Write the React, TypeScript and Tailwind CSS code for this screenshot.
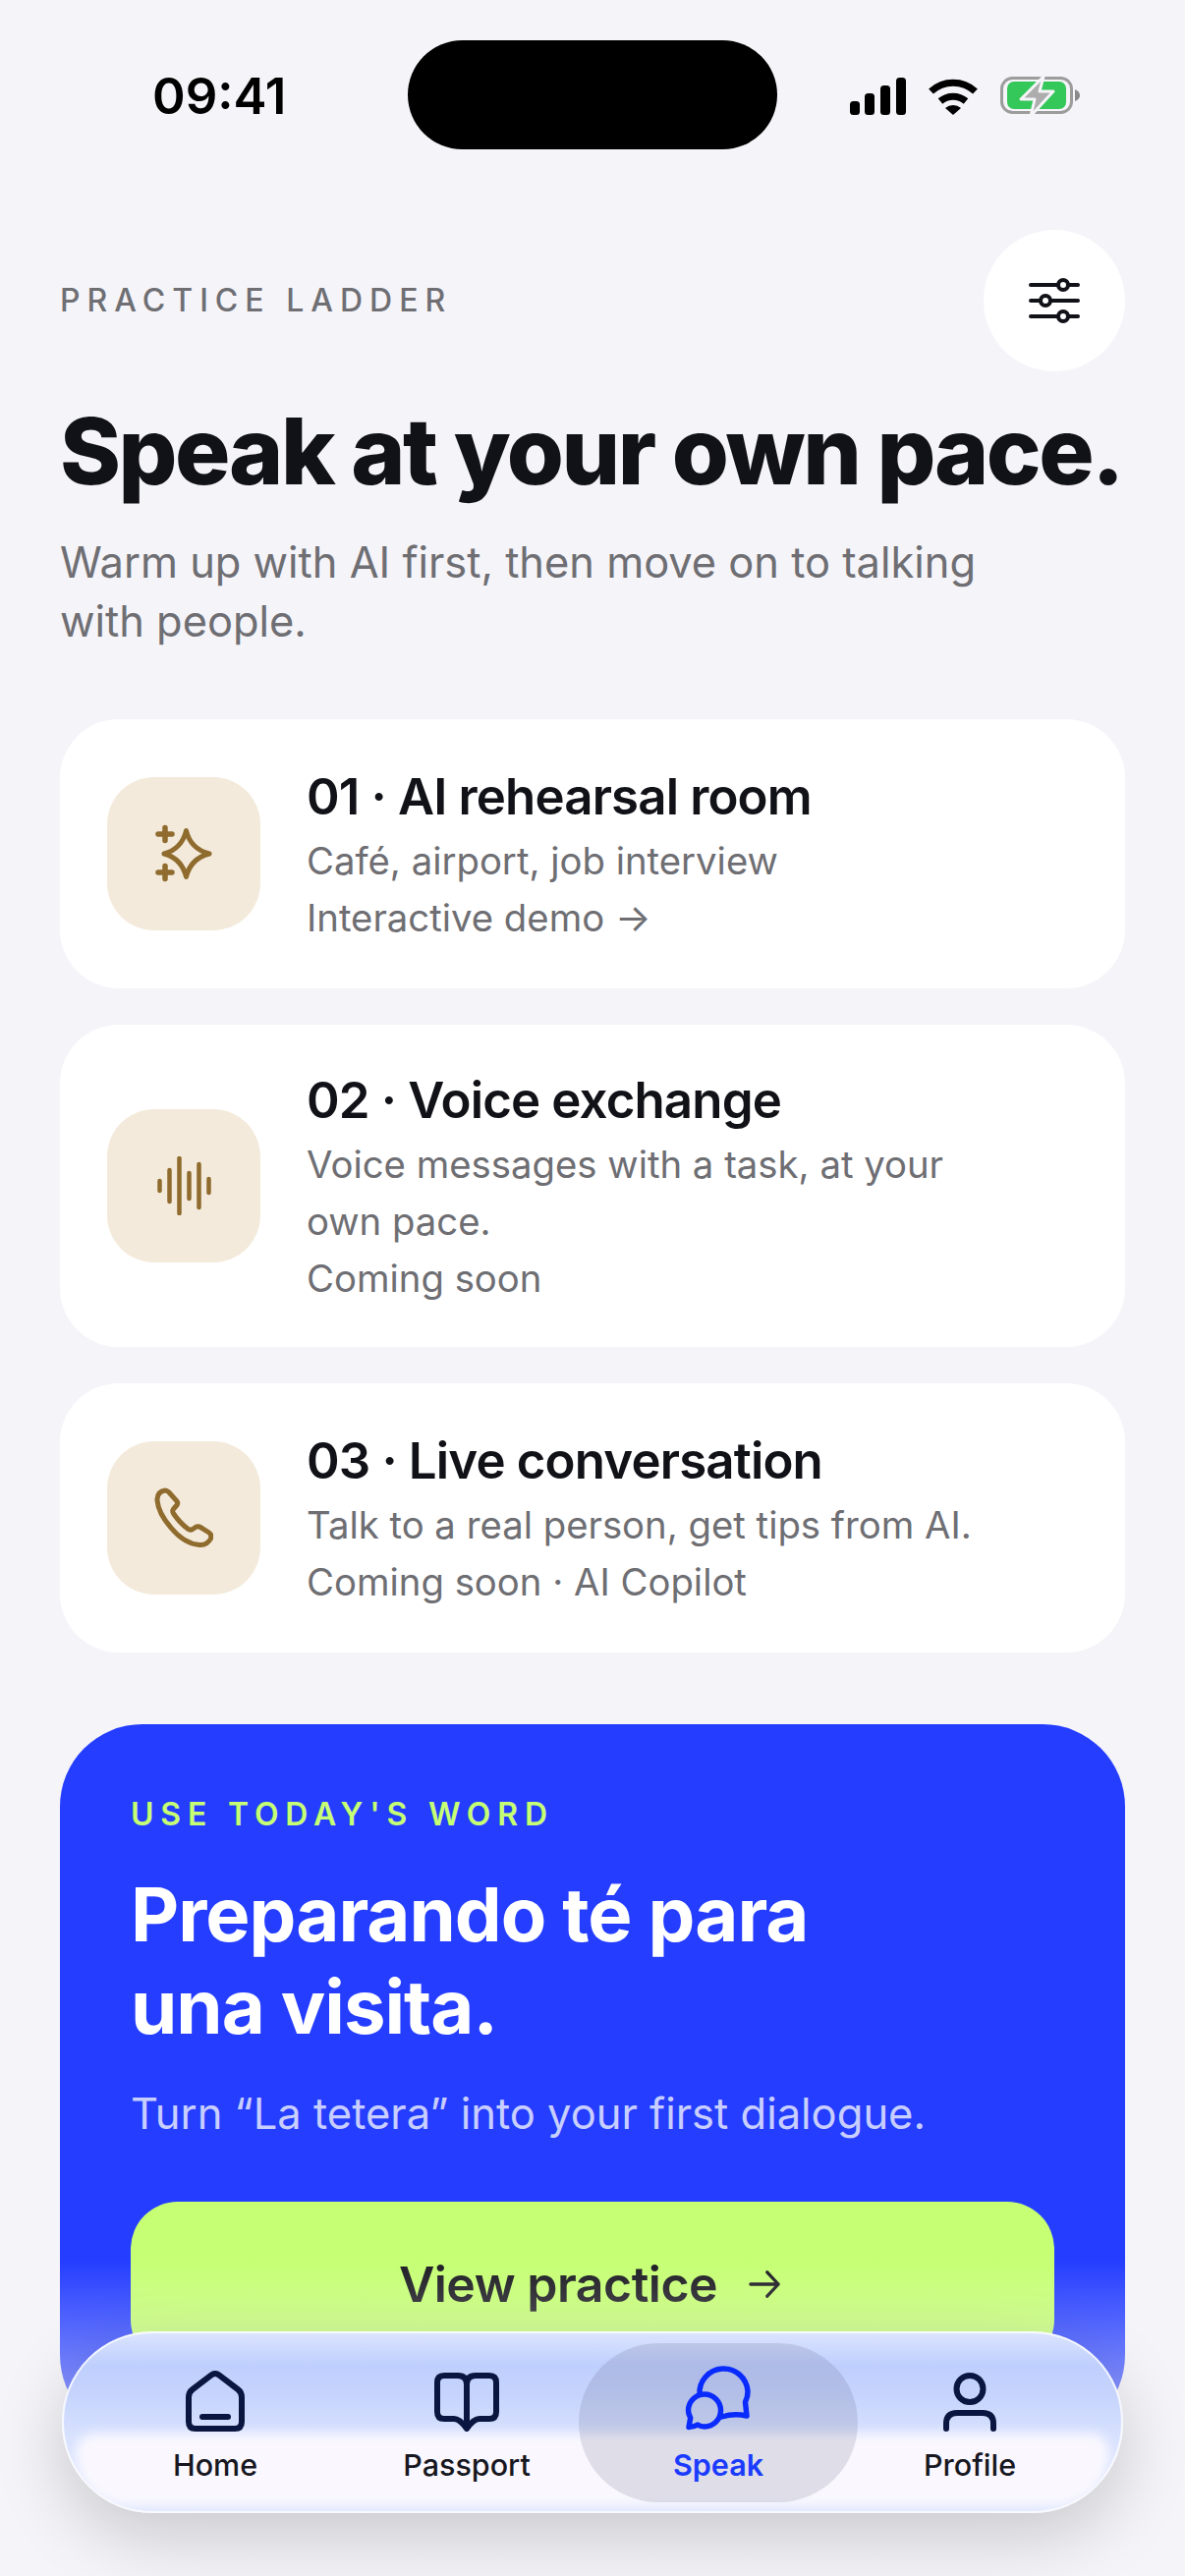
import type { ReactNode } from "react";

const cards = [
  {
    title: "01 · AI rehearsal room",
    lines: ["Café, airport, job interview", "Interactive demo →"],
    icon: "sparkle",
    size: "h-[274px]",
  },
  {
    title: "02 · Voice exchange",
    lines: ["Voice messages with a task, at your", "own pace.", "Coming soon"],
    icon: "wave",
    size: "h-[328px]",
  },
  {
    title: "03 · Live conversation",
    lines: ["Talk to a real person, get tips from AI.", "Coming soon · AI Copilot"],
    icon: "phone",
    size: "h-[274px]",
  },
];

function TileIcon({ name }: { name: string }) {
  if (name === "sparkle") {
    return (
      <svg width="60" height="60" viewBox="0 0 60 60" fill="none" stroke="#8f6b2e" strokeWidth="5" strokeLinecap="round" strokeLinejoin="round">
        <path d="M32.5 6.5Q37 25 56 30Q37 35 32.5 53.5Q28 35 10 30Q28 25 32.5 6.5Z" />
        <path d="M11 3.5V16.5M4 10H18M11 42.5V55.5M4 49H18" strokeWidth="5.5" />
      </svg>
    );
  }
  if (name === "wave") {
    return (
      <svg width="60" height="60" viewBox="0 0 60 60" fill="none" stroke="#8f6b2e" strokeWidth="4.5" strokeLinecap="round">
        <path d="M5.5 25V35M15.5 14V46M25.5 2V58M35.5 17V43M45.5 8V52M55.5 23V37" />
      </svg>
    );
  }
  return (
    <svg width="60" height="62" viewBox="0 0 60 62" fill="none" stroke="#8f6b2e" strokeWidth="5" strokeLinejoin="round">
      <path d="M11 3Q13 3 15 5L23 14Q24.5 16 23 18L19.5 22Q18 24 19.5 26.5Q26 36 34 42Q36.5 44 39 42.5L42 40.5Q44.5 39 47 40.5L55 45.5Q59 48 57.5 52Q54 59 46 58.5Q30 57 17 41Q4 26 3 13Q3 4 11 3Z" />
    </svg>
  );
}

function Card({ title, lines, icon, size }: { title: string; lines: string[]; icon: string; size: string }) {
  return (
    <div className={`flex items-center rounded-[60px] bg-white pl-[48px] ${size}`}>
      <div className="flex h-[156px] w-[156px] shrink-0 items-center justify-center rounded-[48px] bg-[#f3eadb]">
        <TileIcon name={icon} />
      </div>
      <div className="ml-[47px] min-w-0 pt-[3px]">
        <div className="mb-[3px] text-[51px] leading-[66px] font-semibold tracking-[-0.85px] text-[#111118]">{title}</div>
        {lines.map((l) => (
          <div key={l} className="text-[38.3px] leading-[58px] text-[#6e6e73]">
            {l}
          </div>
        ))}
      </div>
    </div>
  );
}

function NavItem({ label, active, children }: { label: string; active?: boolean; children: ReactNode }) {
  return (
    <div className="relative flex h-[162px] w-[256px] flex-col items-center">
      {active && <div className="absolute inset-y-0 left-[-14px] right-[-14px] rounded-[81px] bg-[#4a4a6a]/15" />}
      <div className="relative flex h-[90px] items-end">{children}</div>
      <div className={`relative mt-[14px] text-[30.5px] leading-[40px] ${active ? "font-semibold text-[#1b3bff]" : "font-medium text-[#17171f]"}`}>
        {label}
      </div>
    </div>
  );
}

function StatusBar() {
  return (
    <div className="relative h-[234px]">
      <div className="absolute left-[155px] top-[72px] text-[51px] leading-[52px] font-semibold text-black">09:41</div>
      <div className="absolute left-[415px] top-[41px] h-[111px] w-[376px] rounded-[56px] bg-black" />
      <div className="absolute left-[863px] top-[77px] flex items-center gap-[22px]">
        <svg width="60" height="38" viewBox="0 0 60 38" fill="#000">
          <rect x="2" y="24" width="10" height="14" rx="3.5" />
          <rect x="17" y="16" width="10" height="22" rx="3.5" />
          <rect x="33" y="8" width="10" height="30" rx="3.5" />
          <rect x="49" y="0" width="10" height="38" rx="3.5" />
        </svg>
        <svg width="50" height="38" viewBox="0 0 50 38" fill="none" stroke="#000" strokeWidth="7">
          <path d="M2.5 14A33 33 0 0 1 47.5 14" />
          <path d="M12 24A20 20 0 0 1 38 24" />
          <path d="M25 38L17 31A12 12 0 0 1 33 31Z" fill="#000" stroke="none" />
        </svg>
        <svg width="84" height="42" viewBox="0 0 84 42">
          <rect x="2.5" y="2.5" width="71" height="35" rx="11" fill="none" stroke="#9c9c9c" strokeWidth="3" />
          <rect x="8" y="6" width="60" height="28" rx="7" fill="#34c759" />
          <path d="M77 14Q82 16 82 20Q82 24 77 26Z" fill="#8a8a8a" />
          <path d="M45 1L22 24H36L32 41L55 16H41Z" fill="#adadad" stroke="#f5f4f9" strokeWidth="3" strokeLinejoin="round" />
        </svg>
      </div>
    </div>
  );
}

export default function App() {
  return (
    <div className="relative h-[2622px] w-[1206px] overflow-hidden bg-[#f5f4f9] font-['Inter',sans-serif]">
      <StatusBar />

      <div className="px-[61px]">
        <div className="flex items-center justify-between">
          <div className="text-[32px] font-medium tracking-[7px] text-[#6e6e73]">PRACTICE LADDER</div>
          <button className="flex h-[144px] w-[144px] items-center justify-center rounded-full bg-white">
            <svg width="52" height="48" viewBox="0 0 52 48" fill="none" stroke="#111118" strokeWidth="4" strokeLinecap="round">
              <path d="M2 8H50M2 24H50M2 40H50" />
              <circle cx="35" cy="8" r="5" fill="#fff" />
              <circle cx="17" cy="24" r="5" fill="#fff" />
              <circle cx="35" cy="40" r="5" fill="#fff" />
            </svg>
          </button>
        </div>

        <h1 className="mt-[26px] text-[94px] leading-[110px] font-extrabold tracking-[-2.45px] whitespace-nowrap text-[#111118]">Speak at your own pace.</h1>
        <p className="mt-[28px] w-[1000px] text-[43.4px] leading-[60px] text-[#6e6e73]">Warm up with AI first, then move on to talking with people.</p>

        <div className="mt-[70px] flex flex-col gap-[37px]">
          {cards.map((c) => (
            <Card key={c.title} {...c} />
          ))}
        </div>

        <div className="mt-[73px] rounded-[84px] bg-[#243dff] px-[72px] pt-[72px] pb-[72px]">
          <div className="text-[32px] leading-[40px] font-semibold tracking-[6.8px] text-[#c6ff74]">USE TODAY'S WORD</div>
          <div className="mt-[34px] text-[76px] leading-[94px] font-bold tracking-[-1px] text-white">
            Preparando té para
            <br />
            una visita.
          </div>
          <p className="mt-[32px] text-[43.5px] leading-[60px] text-white/75">Turn “La tetera” into your first dialogue.</p>
          <div className="mt-[60px] flex h-[168px] items-center justify-center gap-[32px] rounded-[48px] bg-[#c6ff74] pr-[6px] text-[50px] font-semibold tracking-[-0.5px] text-[#1c1c22]">
            View practice
            <svg width="32" height="34" viewBox="0 0 34 34" fill="none" stroke="#1c1c22" strokeWidth="3.5" strokeLinecap="round" strokeLinejoin="round">
              <path d="M2 17H32M20 4L32 17L20 30" />
            </svg>
          </div>
        </div>
      </div>

      {/* fade under the floating tab bar */}
      <div className="pointer-events-none absolute inset-x-0 bottom-0 h-[322px] bg-gradient-to-b from-[#f5f4f9]/0 to-[#f5f4f9] to-[90%]" />

      <nav className="absolute left-[63px] top-[2373px] flex h-[185px] w-[1080px] items-center overflow-hidden rounded-[92px] border-[2px] border-white/80 bg-[linear-gradient(180deg,#dbe4ff_0%,#bfcffd_18%,#c6d4fd_35%,#d8e2fe_58%,#dfe7ff_100%)] pl-[26px] shadow-[0_24px_70px_rgba(0,0,0,0.18)]">
        <div className="absolute inset-x-[12px] top-[102px] bottom-[5px] rounded-t-[30px] rounded-b-[85px] bg-[#faf8fe] blur-[6px]" />
        <NavItem label="Home">
          <svg width="60" height="62" viewBox="0 0 60 62" fill="none" stroke="#0b1640" strokeWidth="6" strokeLinecap="round" strokeLinejoin="round">
            <path d="M26.5 4.2Q30 1.8 33.5 4.2L53 19Q57 22 57 27V52Q57 59 50 59H10Q3 59 3 52V27Q3 22 7 19Z" />
            <path d="M17 47H43" />
          </svg>
        </NavItem>
        <NavItem label="Passport">
          <svg width="66" height="60" viewBox="0 0 66 60" fill="none" stroke="#0b1640" strokeWidth="6" strokeLinecap="round" strokeLinejoin="round">
            <path d="M33 12Q33 3 24 3H10Q3 3 3 10V40Q3 47 10 47H20Q26 47 33 57Q40 47 46 47H56Q63 47 63 40V10Q63 3 56 3H42Q33 3 33 12ZM33 12V55" />
          </svg>
        </NavItem>
        <NavItem label="Speak" active>
          <svg width="68" height="68" viewBox="0 0 68 68" fill="none" stroke="#0a2bfd" strokeWidth="5.5" strokeLinecap="round" strokeLinejoin="round">
            <path d="M15 30A24.5 24.5 0 0 1 64 27Q64 33 61.5 38L63 52Q50 49 37.5 53" />
            <path d="M4 63.5L5.7 54Q3.5 50 3.5 46.5A16.5 16.5 0 1 1 36.5 46.5A16.5 16.5 0 0 1 20 63Q16 63 13 61Q9 63.5 4 63.5Z" />
          </svg>
        </NavItem>
        <NavItem label="Profile">
          <svg width="54" height="60" viewBox="0 0 54 60" fill="none" stroke="#0b1640" strokeWidth="6" strokeLinecap="round">
            <circle cx="27" cy="16.5" r="13.5" />
            <path d="M3 57V52Q3 41 14 41H40Q51 41 51 52V57" />
          </svg>
        </NavItem>
      </nav>
    </div>
  );
}
